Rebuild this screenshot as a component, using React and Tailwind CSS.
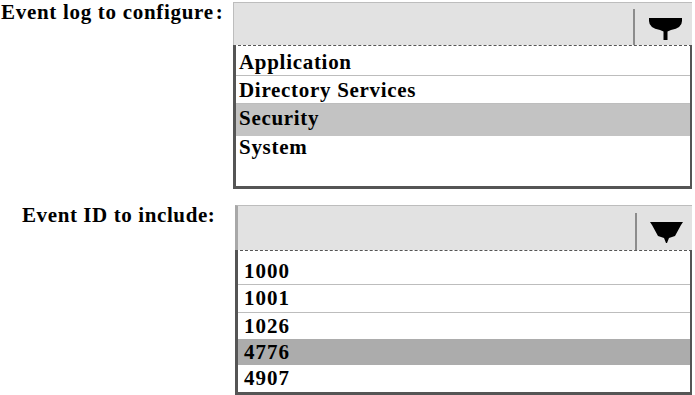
import React from 'react';

const serif = { fontFamily: '"Liberation Serif", "Times New Roman", serif' };

function ArrowTop() {
  return (
    <svg width="33" height="22" viewBox="0 0 33 22">
      <path d="M0 0 H33 V3 Q33 10 22 12 L18.5 13.5 V22 H14.5 V13.5 L11 12 Q0 10 0 3 Z" fill="#000" />
    </svg>
  );
}

function ArrowBottom() {
  return (
    <svg width="33" height="21" viewBox="0 0 33 21">
      <path d="M0 0 H33 L31 3 L25 14 L19 16 L17 21 H16 L14 16 L8 14 L2 3 Z" fill="#000" />
    </svg>
  );
}

function Header({ height, sepTop, btnWidth, btnPad, leftBorder, children }) {
  return (
    <div className="flex flex-col">
      <div className={`flex bg-[#e2e2e2] border-t border-[#bdbdbd] ${height} ${leftBorder}`}>
        <div className="flex-1" />
        <div className={`w-[2px] bg-[#8c8c8c] ${sepTop}`} />
        <div className={`${btnWidth} ${btnPad}`}>{children}</div>
      </div>
      <div className="h-0 border-t border-dashed border-[#555]" />
    </div>
  );
}

export default function App() {
  return (
    <div
      className="w-[695px] h-[395px] bg-white text-black font-bold text-[21px] tracking-[0.7px] overflow-hidden"
      style={serif}
    >
      {/* Event log section */}
      <div className="flex items-start pt-[2px]">
        <div className="w-[233px] leading-[24px] -mt-[2px] pl-[1px] whitespace-nowrap">
          Event log to configure<span className="ml-[2px]">:</span>
        </div>
        <div className="w-[459px] flex flex-col">
          <Header
            height="h-[43px]"
            sepTop="mt-[6px]"
            btnWidth="w-[57px]"
            btnPad="pl-[14px] pt-[15px]"
            leftBorder="border-l border-l-[#bdbdbd]"
          >
            <ArrowTop />
          </Header>
          <div className="h-[143px] border-l-[3px] border-r-2 border-b-[3px] border-[#555] flex flex-col">
            <div className="h-[30px] leading-[26px] pt-[3px] pl-[3px] border-b border-[#bdbdbd]">Application</div>
            <div className="h-[28px] leading-[26px] pt-[1px] pl-[3px] border-b border-[#bdbdbd]">Directory Services</div>
            <div className="h-[32px] leading-[28px] pl-[3px] bg-[#c3c3c3]">Security</div>
            <div className="h-[28px] leading-[22px] pl-[3px]">System</div>
          </div>
        </div>
      </div>

      {/* Event ID section */}
      <div className="flex items-start mt-[16px]">
        <div className="w-[235px] pl-[22px] leading-[24px] -mt-[2px] whitespace-nowrap tracking-[0.6px]">
          Event ID to include:
        </div>
        <div className="w-[457px] flex flex-col">
          <Header
            height="h-[45px]"
            sepTop="mt-[7px]"
            btnWidth="w-[55px]"
            btnPad="pl-[13px] pt-[16px]"
            leftBorder="border-l-[3px] border-l-[#a8a8a8]"
          >
            <ArrowBottom />
          </Header>
          <div className="border-l-[3px] border-r-2 border-b-[3px] border-[#555] flex flex-col tracking-[1px]">
            <div className="h-[34px] pt-[7px] leading-[26px] pl-[6px] border-b border-[#bdbdbd]">1000</div>
            <div className="h-[28px] leading-[26px] pl-[6px] border-b border-[#bdbdbd]">1001</div>
            <div className="h-[26px] leading-[26px] pl-[6px]">1026</div>
            <div className="h-[26px] leading-[26px] pl-[6px] bg-[#acacac]">4776</div>
            <div className="h-[27px] leading-[26px] pl-[6px]">4907</div>
          </div>
        </div>
      </div>
    </div>
  );
}
